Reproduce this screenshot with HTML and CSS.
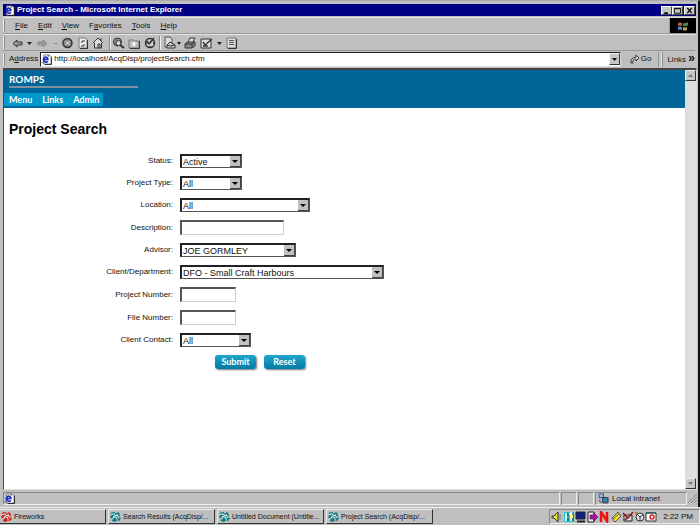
FILE: index.html
```
<!DOCTYPE html>
<html lang="en">
<head>
<meta charset="utf-8">
<title>Project Search</title>
<link rel="stylesheet" href="styles.css">
</head>
<body>
<svg class="defs" aria-hidden="true">
  <symbol id="ie" viewBox="0 0 12 12"><path d="M3 1h6l2 2v8H3z" fill="#fff" stroke="#777"/><path d="M11.500 3v8.500H4" fill="none" stroke="#222"/><path d="M7.500 8Q6 9.500 4 8.500 2 7 3 5 4.500 2.500 6.500 4 7.500 5 7.500 6H3" fill="none" stroke="#1224d0" stroke-width="1.800"/><path d="M1 9Q0 11 3 9L8 3Q10 1 7 2" fill="none" stroke="#557" stroke-width=".8"/></symbol>
  <symbol id="down" viewBox="0 0 7 4"><path d="M0 0h7L3.500 4z"/></symbol>
  <symbol id="swirl" viewBox="0 0 12 12"><path d="M1 2l4-1 1 2 3-2 2 3-1 2 2 2-2 3-3-1-1 2-4-1 1-3-3-1 1-2z" fill="currentColor"/><path d="M1 4l3-1 2 2 3-1M3 9l1-3 3 1 1 3M8 5l2 3" fill="none" stroke="#e4eeee" stroke-width="1.100"/></symbol>
</svg>
<div class="window">
  <header class="titlebar">
    <svg class="ico"><use href="#ie"/></svg><span class="grow">Project Search - Microsoft Internet Explorer</span>
    <button class="wbtn" aria-label="Minimize"><svg viewBox="0 0 9 8"><path d="M2 7h4" stroke="#000" stroke-width="2"/></svg></button>
    <button class="wbtn" aria-label="Maximize"><svg viewBox="0 0 9 8"><path d="M1 1.500h7V7H1zM1 2h7" stroke="#000" fill="none"/></svg></button>
    <button class="wbtn close" aria-label="Close"><svg viewBox="0 0 9 8"><path d="M2 1l5 6M7 1L2 7" stroke="#000" stroke-width="1.400"/></svg></button>
  </header>
  <nav class="menubar">
    <div class="menus"><i class="grip"></i><a href="#"><u>F</u>ile</a><a href="#"><u>E</u>dit</a><a href="#"><u>V</u>iew</a><a href="#">F<u>a</u>vorites</a><a href="#"><u>T</u>ools</a><a href="#"><u>H</u>elp</a></div>
    <div class="brand"><svg viewBox="0 0 12 10"><path d="M1 2q2-1 4 0v3q-2-1-4 0z" fill="#c65a4a"/><path d="M6 2q2 1 5-1v3q-2 2-5 1z" fill="#4a8a50"/><path d="M1 6q2-1 4 0v3q-2-1-4 0z" fill="#5888c0"/><path d="M6 6q2 1 4 0v3q-2 1-4 0z" fill="#c8a850"/></svg></div>
  </nav>
  <div class="toolbar">
    <i class="grip"></i>
    <svg class="tools" viewBox="0 0 232 14" fill="none" stroke="#333">
      <path d="M11 4L7 7.500l4 3.500V9h5V6h-5z" fill="#999"/><path d="M21 6h5l-2.500 3z" fill="#222" stroke="none"/>
      <g stroke="#888"><path d="M37 4l4 3.500-4 3.500V9h-5V6h5z" fill="#999"/><path d="M48 7.500h3"/></g>
      <circle cx="61.500" cy="7" r="4.500" fill="#888" stroke-width="1.500"/><path d="M59.500 5l4 4m0-4l-4 4" stroke="#eee"/>
      <path d="M73 2h6l2 2v8h-8z" fill="#eee" stroke="#777"/><path d="M79 5h-3v2m-1 3h3V8"/><path d="M81.500 4v8.500H74"/>
      <path d="M87 7l5-5 5 5M88.500 7v5h7V7M92 12V8h2v4M95 5V2" fill="#ddd"/>
      <path d="M103.500 0v14" stroke="#888"/><path d="M104.500 0v14" stroke="#eee"/>
      <circle cx="111.500" cy="6" r="4" fill="#888"/><circle cx="112.500" cy="7" r="2.500" fill="#ddd"/><path d="M114 9l4 3" stroke-width="2"/>
      <path d="M123 4h4l1 1h5v7h-10z" fill="#bbb" stroke="#777"/><path d="M128 5l1 2h2l-2 1 1 3-2-2-2 2 1-3-2-1h2z" fill="#fff" stroke="none"/><path d="M133.500 5v7.500H124"/>
      <circle cx="144" cy="7" r="4.500" fill="#ccc" stroke-width="1.500"/><path d="M143 8l5-6M143 8l-2-3m-1 2h1m3 3v1m3-4h1" stroke-width="1.500"/>
      <path d="M153.500 0v14" stroke="#888"/><path d="M154.500 0v14" stroke="#eee"/>
      <path d="M159 1h5l2 2v8h-7z" fill="#ddd" stroke="#555"/><path d="M161 9l3-3 5 3v3h-8zl4 1 4-1" fill="#ccc"/><path d="M171 6h4l-2 3z" fill="#222" stroke="none"/>
      <path d="M182 6l2-4h5l-2 4" fill="#ddd"/><path d="M179 8l3-2h7v4l-3 2h-7z" fill="#888"/><path d="M179 8h7v4m0-4l3-2"/>
      <path d="M195 3h10v9h-10z" fill="#ddd"/><path d="M197 6l2 3 7-6M197 10h5" stroke-width="1.400"/><path d="M211 6h5l-2.500 3z" fill="#222" stroke="none"/>
      <path d="M221 2h9v10h-9z" fill="#ddd" stroke="#777"/><path d="M223 4.500h5m-5 2h5m-5 2h5" stroke="#555"/><path d="M230.500 3v9.500H222"/>
    </svg>
  </div>
  <form class="address">
    <i class="grip"></i><label for="url">A<u>d</u>dress</label>
    <div class="urlbox"><svg class="ico"><use href="#ie"/></svg><input id="url" value="http://localhost/AcqDisp/projectSearch.cfm"><button type="button" class="drop" aria-label="Show addresses"><svg><use href="#down"/></svg></button></div>
    <button type="button" class="go"><svg viewBox="0 0 10 10"><path d="M1 9Q0 4 6 3V1l3 3-3 3V5Q2 5 3 9z" fill="#ddd" stroke="#333"/></svg>Go</button>
    <i class="grip"></i><a class="links" href="#">Links <b>»</b></a>
  </form>
  <div class="viewport">
    <main>
      <header class="banner"><div class="logo">ROMPS</div><nav><a href="#">Menu</a><a href="#">Links</a><a href="#">Admin</a></nav></header>
      <h1>Project Search</h1>
      <form class="search">
        <label for="status">Status:</label><select id="status" class="w62"><option>Active</option></select>
        <label for="type">Project Type:</label><select id="type" class="w62"><option>All</option></select>
        <label for="loc">Location:</label><select id="loc" class="w130"><option>All</option></select>
        <label for="desc">Description:</label><input id="desc" class="w104">
        <label for="adv">Advisor:</label><select id="adv" class="w116"><option>JOE GORMLEY</option></select>
        <label for="dept">Client/Department:</label><select id="dept" class="w204"><option>DFO - Small Craft Harbours</option></select>
        <label for="pn">Project Number:</label><input id="pn" class="w56">
        <label for="fn">File Number:</label><input id="fn" class="w56">
        <label for="cc">Client Contact:</label><select id="cc" class="w71"><option>All</option></select>
        <div class="actions"><button type="button">Submit</button><button type="reset">Reset</button></div>
      </form>
    </main>
    <div class="scroll"><button aria-label="Scroll up"><svg class="up"><use href="#down"/></svg></button><button aria-label="Scroll down"><svg><use href="#down"/></svg></button></div>
  </div>
  <footer class="status"><div class="grow"><svg class="ico"><use href="#ie"/></svg></div><div class="cell"></div><div class="cell"></div><div class="zone"><svg viewBox="0 0 12 12"><path d="M1 1h5v4H1z" fill="#9bd" stroke="#448"/><path d="M5 5h6v5H5z" fill="#38a" stroke="#236"/><path d="M2 7v3h2M5 11h6" stroke="#555" fill="none"/></svg>Local intranet</div><svg class="resize" viewBox="0 0 9 9"><path d="M0 9l9-9M3 9l6-6M6 9l3-3" stroke="#888"/></svg></footer>
</div>
<div class="taskbar">
  <button class="task red"><svg><use href="#swirl"/></svg>Fireworks</button>
  <button class="task"><svg><use href="#swirl"/></svg>Search Results (AcqDisp/...</button>
  <button class="task"><svg><use href="#swirl"/></svg>Untitled Document (Untitle...</button>
  <button class="task"><svg><use href="#swirl"/></svg>Project Search (AcqDisp/...</button>
  <div class="tray">
    <svg viewBox="0 0 108 12">
      <path d="M1 5h2l4-4v10L3 7H1z" fill="#e8e020" stroke="#333"/><path d="M9 3v6" stroke="#777"/>
      <path d="M13 1h10v10H13z" fill="#20c8c8"/><path d="M15 2v8m0-4h3M20 1v9m-2-7h4" stroke="#fff" stroke-width="1.500"/><path d="M17 2v8M22 2v8" stroke="#134"/><path d="M19 4h3v3h-3z" fill="#ff6"/>
      <path d="M25 1h9v7h-9z" fill="#128" stroke="#222"/><path d="M26 10.500h8" stroke="#222" stroke-width="2"/>
      <path d="M37 1h6v10h-6z" fill="#eee" stroke="#222"/><path d="M39 4h4V2l4 4-4 4V8h-4z" fill="#b010a0" stroke="#404" stroke-width=".6"/>
      <path d="M50 11V1l6 9V1" fill="none" stroke="#f01010" stroke-width="2.500"/>
      <path d="M61 7l6-6 3 4-6 6z" fill="#f0e020" stroke="#555"/><path d="M62 8l6-5" stroke="#555"/>
      <path d="M73 4h8v6h-8z" fill="#ddd" stroke="#222"/><path d="M72 2l5 5 5-6M74 9l3-3" stroke="#811" stroke-width="1.500" fill="none"/>
      <circle cx="89" cy="6" r="4" fill="#eee" stroke="#333"/><path d="M85 2l4 4 3-2m-3 2v4" stroke="#333" fill="none"/><path d="M84 2h3" stroke="#b80" stroke-width="2"/>
      <path d="M95 2h10v8H95z" fill="#fff" stroke="#333"/><path d="M95 2h10" stroke="#055"/><circle cx="101" cy="6" r="2" fill="none" stroke="#d22" stroke-width="1.500"/>
    </svg>
    <time>2:22 PM</time>
  </div>
</div>
</body>
</html>
```
FILE: styles.css
```
* { box-sizing: border-box; }
body { margin: 0; height: 100vh; display: flex; flex-direction: column; overflow: hidden; background: #bfbfbf; color: #111; font: 8px/12px "Liberation Sans", Arial, sans-serif; }
a { color: inherit; text-decoration: none; }
button, input, select { font: inherit; color: inherit; margin: 0; padding: 0; border: 0; border-radius: 0; background: none; outline: 0; }
svg { display: block; flex: none; }
.defs { position: absolute; width: 0; height: 0; }
.grow { flex: 1; }
.ico { width: 11px; height: 11px; }
.window { flex: 1; min-height: 0; display: flex; flex-direction: column; padding: 3px 1px 0; border-top: 1px solid #aaa; border-right: 2px solid #111; }
.titlebar { display: flex; align-items: center; height: 12px; margin: 0 1px 0 2px; padding: 0 1px; background: #000084; color: #fff; font-weight: bold; }
.titlebar .ico { margin-right: 2px; }
.wbtn { width: 11px; height: 9px; background: #c6c6c6; border: 1px solid; border-color: #fff #444 #444 #fff; }
.wbtn svg { width: 9px; height: 7px; }
.close { margin-left: 1px; }
.menubar { display: flex; height: 17px; margin: 1px 1px 0 2px; border-top: 1px solid #e4e4e4; border-bottom: 1px solid #999; }
.menus { flex: 1; display: flex; align-items: center; gap: 10px; border-right: 1px solid #999; }
.grip { width: 2px; height: 13px; border-left: 1px solid #eee; border-right: 1px solid #888; }
.brand { width: 26px; display: grid; place-items: center; background: #000; }
.brand svg { width: 12px; height: 10px; }
.toolbar { display: flex; align-items: center; height: 16px; margin: 0 2px; border-top: 1px solid #e4e4e4; }
.tools { width: 232px; height: 14px; margin-left: 1px; }
.address { display: flex; align-items: center; height: 17px; margin: 0 2px; border-top: 1px solid #999; }
.address .grip { margin-right: 4px; }
.urlbox { flex: 1; display: flex; align-items: center; height: 15px; margin: 0 2px; background: #fff; border: 1px solid; border-color: #222 #ddd #ddd #222; }
.urlbox input { flex: 1; margin-left: 2px; }
.drop { width: 11px; height: 12px; background: #c6c6c6; border: 1px solid; border-color: #eee #333 #333 #eee; }
.drop svg { width: 5px; height: 3px; margin: 0 auto; }
.go { display: flex; align-items: center; gap: 1px; height: 15px; padding: 0 7px; border-right: 1px solid #999; }
.go svg { width: 10px; height: 10px; }
.go + .grip { margin-left: 2px; }
.links b { font-size: 12px; }
.viewport { flex: 1; min-height: 0; display: flex; margin: 1px 0 0 2px; border: 1px solid; border-width: 2px 1px 1px 1px; border-color: #444 #ddd #ddd #444; background: #fff; }
main { flex: 1; }
.banner { height: 38px; background: #006699; color: #fff; font-family: Lato, "Liberation Sans", sans-serif; font-weight: bold; display: flex; flex-direction: column; align-items: flex-start; justify-content: space-between; padding-bottom: 2px; }
.logo { width: 129px; margin-left: 5px; padding-top: 3px; font-size: 10px; line-height: 13px; border-bottom: 2px solid #8290a0; }
.banner nav { display: flex; gap: 10px; padding: 0 4px 0 5px; background: #0099cc; font-size: 9px; line-height: 13px; }
h1 { margin: 13px 5px 16px; font-size: 14px; line-height: 17px; color: #000; }
.search { display: grid; grid-template-columns: 169px 1fr; column-gap: 7px; row-gap: 8px; align-items: center; }
.search label { text-align: right; }
.search select, .search input { height: 14px; padding-left: 1px; font-size: 9px; line-height: 12px; background: #fff; border: 1px solid; }
.search input { height: 15px; border-width: 2px 1px 1px 2px; border-color: #555 #ccc #ccc #555; }
.search select { appearance: none; border-width: 2px 1px 1px 2px; border-color: #222 #555 #555 #222; background: #fff url("data:image/svg+xml,%3Csvg xmlns='http://www.w3.org/2000/svg' width='11' height='11'%3E%3Cpath d='M0 0h11v11H0z' fill='%23c0c0c0'/%3E%3Cpath d='M10.500 0v10.500H0' fill='none' stroke='%23444'/%3E%3Cpath d='M2 4h6L5 7z'/%3E%3C/svg%3E") right center no-repeat; }
.w56 { width: 56px; } .w62 { width: 62px; } .w71 { width: 71px; } .w104 { width: 104px; } .w116 { width: 116px; } .w130 { width: 130px; } .w204 { width: 204px; }
.actions { grid-column: 2; display: flex; gap: 8px; margin-left: 35px; }
.actions button { width: 41px; height: 14px; border-radius: 3px; background: linear-gradient(#21a5cc, #007ba5); color: #fff; font: bold 9px/12px Lato, "Liberation Sans", sans-serif; box-shadow: 1px 1px 2px #777; }
.scroll { width: 11px; display: flex; flex-direction: column; justify-content: space-between; background: #dedede; }
.scroll button { height: 11px; background: #c6c6c6; border: 1px solid; border-color: #eee #333 #333 #eee; }
.scroll svg { width: 5px; height: 3px; margin: 0 auto; fill: #777; }
.up { transform: rotate(180deg); }
.status { display: flex; align-items: center; gap: 1px; height: 17px; margin: 0 0 0 2px; }
.status > div { height: 13px; border: 1px solid; border-color: #888 #eee #eee #888; }
.cell { width: 16px; }
.zone { width: 92px; display: flex; align-items: center; gap: 3px; padding-left: 2px; }
.zone svg { width: 11px; height: 11px; }
.resize { width: 9px; height: 9px; }
.taskbar { display: flex; align-items: center; gap: 2px; height: 18px; margin-left: -1px; border-top: 1px solid #eee; }
.task { display: flex; align-items: center; gap: 2px; width: 107px; height: 15px; padding-left: 1px; background: #bfbfbf; border: 1px solid; border-color: #eee #333 #333 #eee; white-space: nowrap; color: #111; font-size: 7px; }
.task svg { width: 11px; height: 11px; color: #087880; }
.task.red svg { color: #d01818; }
.tray { display: flex; align-items: center; gap: 4px; height: 15px; margin-left: auto; padding: 0 6px 0 1px; border: 1px solid; border-color: #888 #eee #eee #888; }
.tray svg { width: 108px; height: 12px; }
```
